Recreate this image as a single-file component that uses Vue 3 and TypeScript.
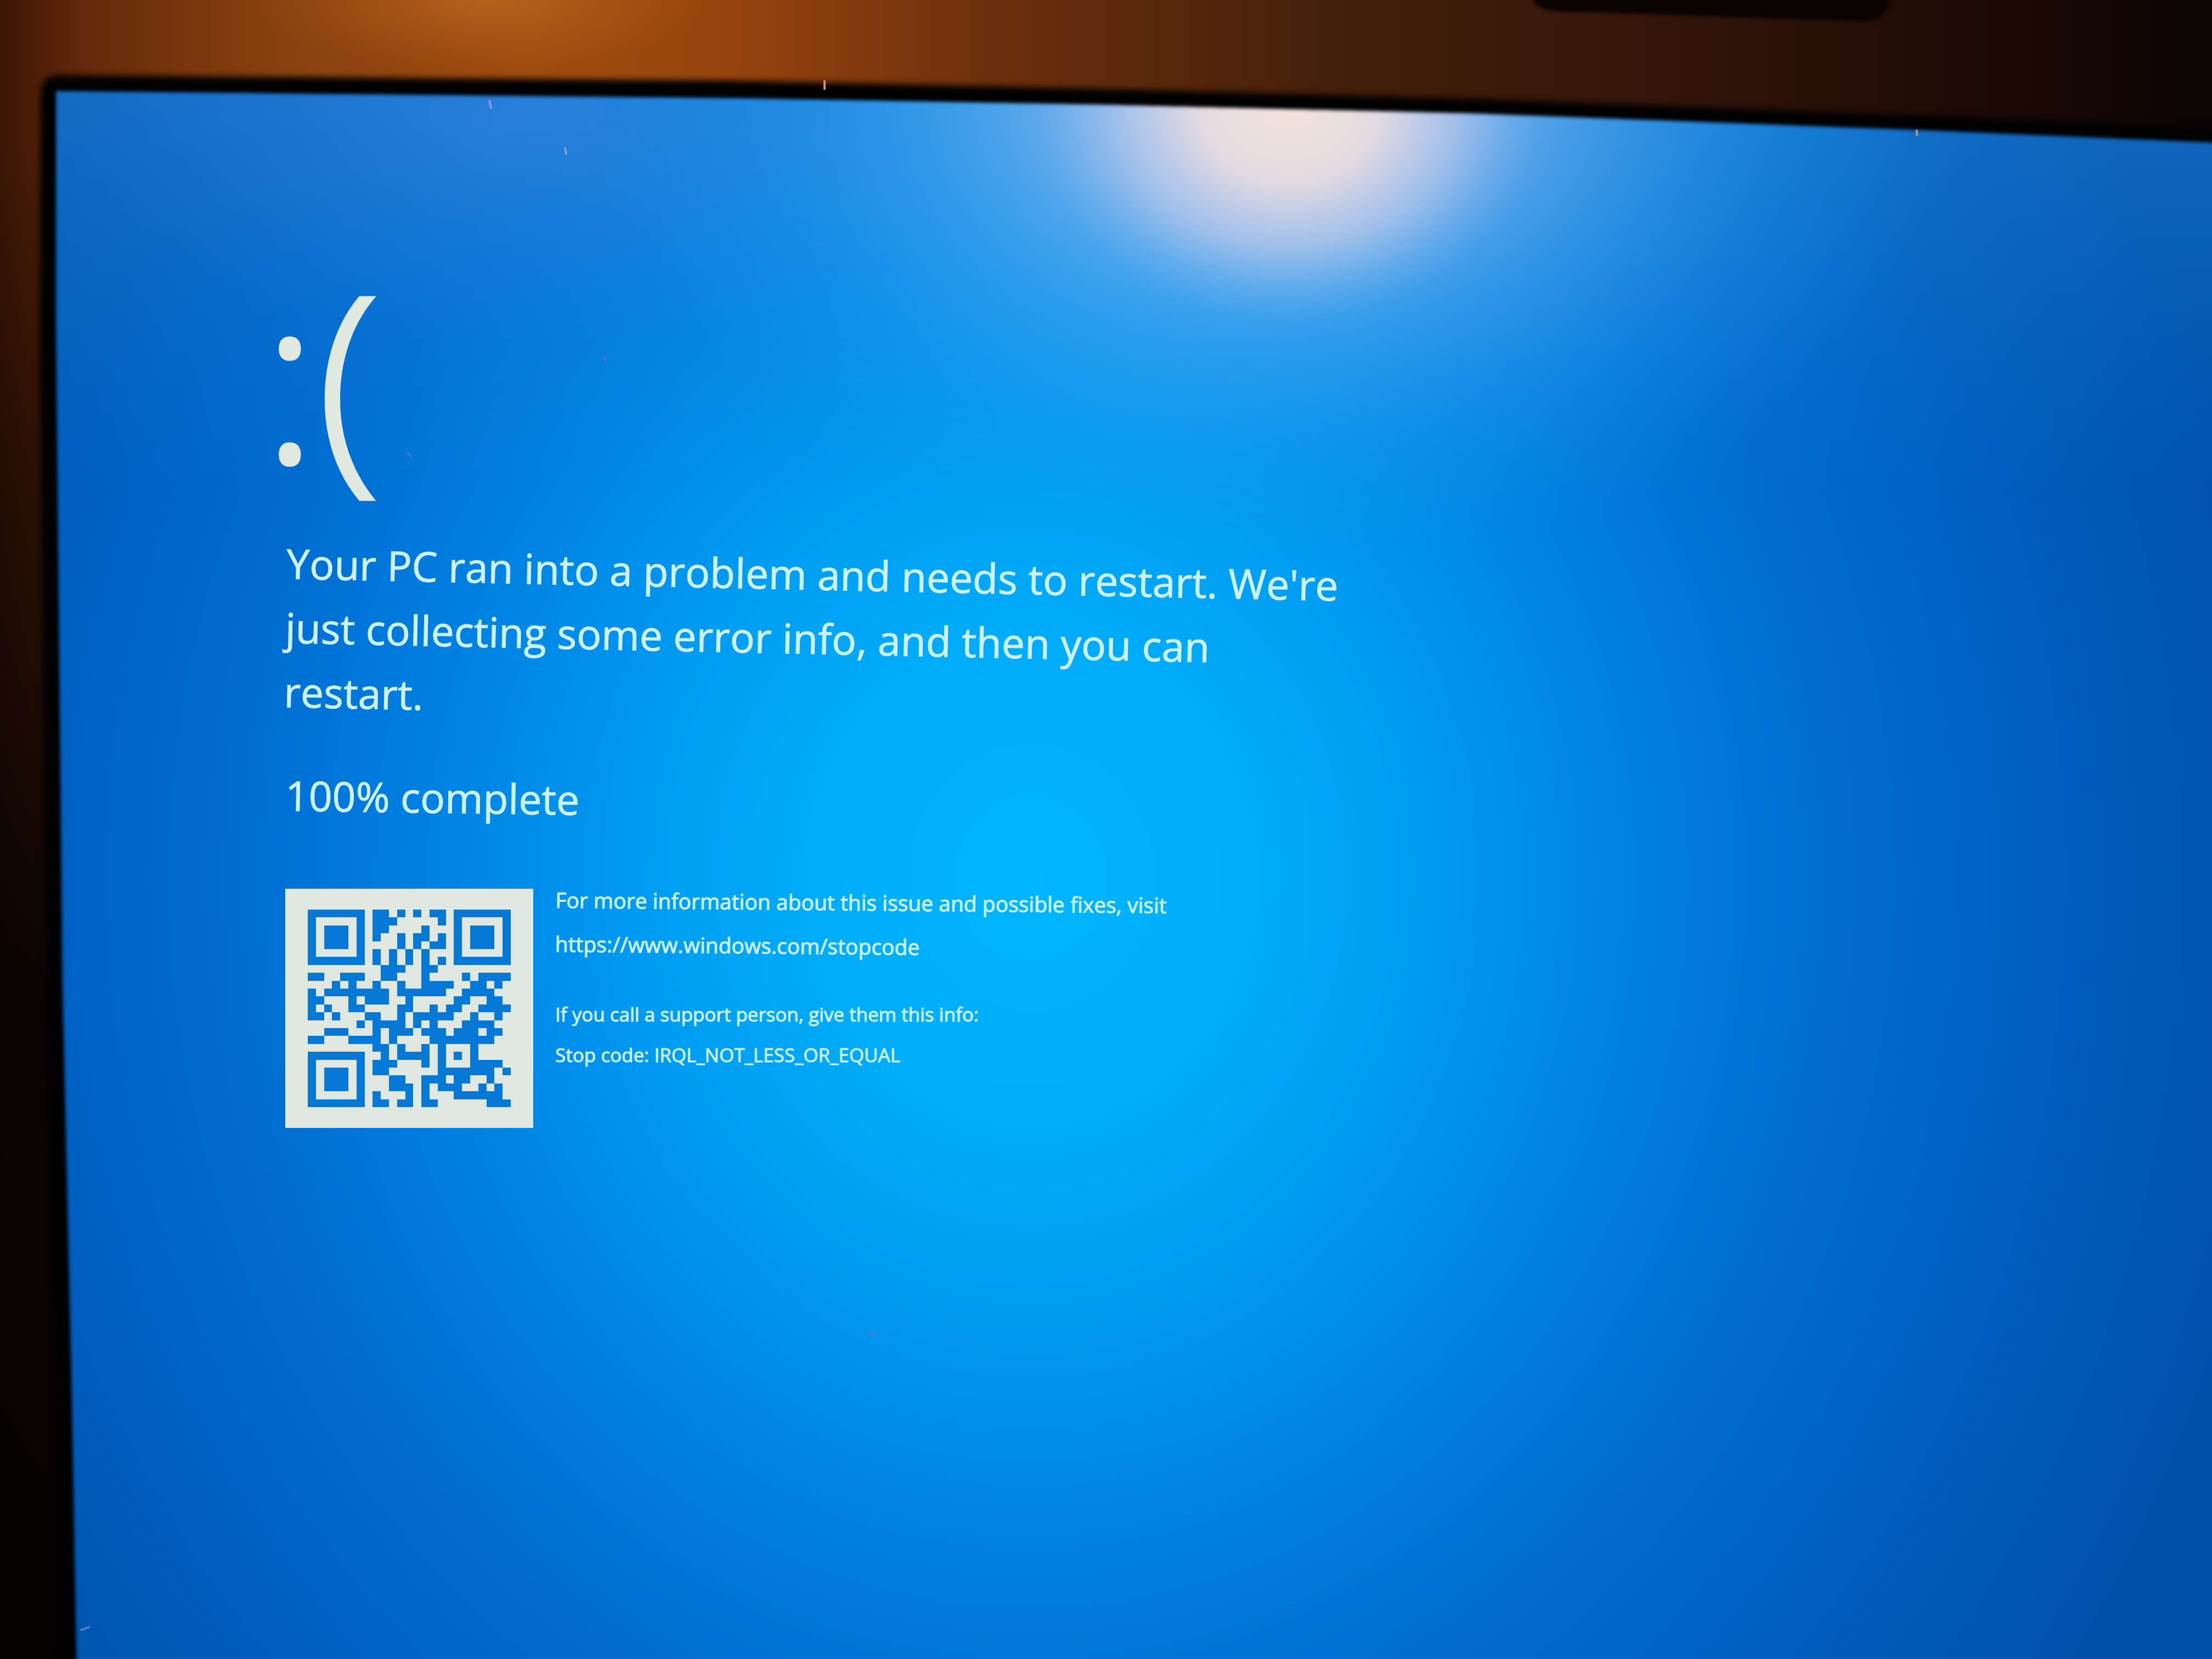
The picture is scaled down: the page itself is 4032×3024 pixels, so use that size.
<script setup lang="ts">
const modules: string[] = [
  '1111111011010101101111111',
  '1000001011100000101000001',
  '1011101011000010001011101',
  '1011101010010110101011101',
  '1011101000010101101011101',
  '1000001010101010001000001',
  '1111111010101010101111111',
  '0000000001110011000000000',
  '1100111001100010000101111',
  '0001010010010011110011010',
  '1011111111011111100111100',
  '1100010111001000001100110',
  '1010011000011001011001111',
  '1101000110010111110010010',
  '0000001011110101000111100',
  '0011100010111011101110110',
  '1100011110100001111111100',
  '0000000011010010100010000',
  '1111111001011110101010000',
  '1000001011100010100011110',
  '1011101011000000111111101',
  '1011101000110011101100100',
  '1011101000111010111001010',
  '1000001010001010001111110',
  '1111111011011011000000111',
]

// One horizontal run of filled modules becomes one rectangle in the path.
const qrPath: string = modules
  .flatMap((row, y) =>
    [...row.matchAll(/1+/g)].map((run) => `M${run.index} ${y}h${run[0].length}v1h-${run[0].length}z`),
  )
  .join('')
</script>

<template>
  <div class="monitor">
    <svg class="backdrop" viewBox="0 0 4032 3024" preserveAspectRatio="none" aria-hidden="true">
      <defs>
        <linearGradient id="bezel" x1="0" x2="1" y1="0" y2="0">
          <stop offset="0" stop-color="#3c1606" />
          <stop offset="0.04" stop-color="#662a0a" />
          <stop offset="0.12" stop-color="#86400f" />
          <stop offset="0.24" stop-color="#a04c10" />
          <stop offset="0.33" stop-color="#96440e" />
          <stop offset="0.45" stop-color="#6c2f0c" />
          <stop offset="0.6" stop-color="#44200a" />
          <stop offset="0.76" stop-color="#32150a" />
          <stop offset="0.9" stop-color="#1c0a05" />
          <stop offset="1" stop-color="#0c0405" />
        </linearGradient>
        <linearGradient id="side" x1="0" x2="0" y1="0" y2="1">
          <stop offset="0.08" stop-color="#060202" stop-opacity="0" />
          <stop offset="0.3" stop-color="#060202" stop-opacity="0.5" />
          <stop offset="0.6" stop-color="#060202" stop-opacity="0.92" />
          <stop offset="1" stop-color="#060202" />
        </linearGradient>
        <radialGradient id="lamp" gradientUnits="userSpaceOnUse" cx="0" cy="0" r="1" gradientTransform="translate(880 0) scale(420 130)">
          <stop offset="0" stop-color="#d07828" stop-opacity="0.5" />
          <stop offset="1" stop-color="#c06820" stop-opacity="0" />
        </radialGradient>
        <radialGradient id="panel" gradientUnits="userSpaceOnUse" cx="0" cy="0" r="1" gradientTransform="translate(1880 1600) scale(2300 2560)">
          <stop offset="0" stop-color="#00b6ff" />
          <stop offset="0.16" stop-color="#00adfc" />
          <stop offset="0.3" stop-color="#009df3" />
          <stop offset="0.46" stop-color="#0084e4" />
          <stop offset="0.62" stop-color="#006ed3" />
          <stop offset="0.8" stop-color="#005fc0" />
          <stop offset="1" stop-color="#0051aa" />
        </radialGradient>
        <linearGradient id="rim" gradientUnits="userSpaceOnUse" x1="0" x2="0" y1="160" y2="900">
          <stop offset="0" stop-color="#3c98e4" stop-opacity="0.34" />
          <stop offset="1" stop-color="#2090e4" stop-opacity="0" />
        </linearGradient>
        <radialGradient id="halo" gradientUnits="userSpaceOnUse" cx="0" cy="0" r="1" gradientTransform="translate(2330 180) scale(1250 860)">
          <stop offset="0" stop-color="#b4c8f0" stop-opacity="0.95" />
          <stop offset="0.3" stop-color="#8cbcf0" stop-opacity="0.75" />
          <stop offset="0.5" stop-color="#58b0f2" stop-opacity="0.52" />
          <stop offset="0.75" stop-color="#2ca4f2" stop-opacity="0.24" />
          <stop offset="1" stop-color="#1498f0" stop-opacity="0" />
        </radialGradient>
        <radialGradient id="glare" gradientUnits="userSpaceOnUse" cx="0" cy="0" r="1" gradientTransform="translate(2350 190) scale(460 400)">
          <stop offset="0" stop-color="#f3e2da" />
          <stop offset="0.35" stop-color="#ecdee0" stop-opacity="0.92" />
          <stop offset="0.65" stop-color="#d4d2e8" stop-opacity="0.5" />
          <stop offset="0.85" stop-color="#b8c8ec" stop-opacity="0.16" />
          <stop offset="1" stop-color="#a8c4f0" stop-opacity="0" />
        </radialGradient>
        <radialGradient id="sheen" gradientUnits="userSpaceOnUse" cx="0" cy="0" r="1" gradientTransform="translate(960 220) scale(900 400)">
          <stop offset="0" stop-color="#5c94e4" stop-opacity="0.3" />
          <stop offset="1" stop-color="#4080d8" stop-opacity="0" />
        </radialGradient>
        <filter id="soft" x="-2%" y="-2%" width="104%" height="104%" color-interpolation-filters="sRGB">
          <feGaussianBlur stdDeviation="6" />
        </filter>
        <filter id="edge" x="-2%" y="-2%" width="104%" height="104%" color-interpolation-filters="sRGB">
          <feGaussianBlur stdDeviation="3" />
        </filter>
        <clipPath id="glass">
          <path d="M102 166L1344 179L2016 191L2688 207L3494 237L4060 261V3060H140L130 2500L114 1800L102 600z" />
        </clipPath>
      </defs>
      <rect width="4032" height="3024" fill="url(#bezel)" />
      <rect width="1400" height="140" fill="url(#lamp)" />
      <rect width="200" height="3024" fill="url(#side)" />
      <path filter="url(#edge)" fill="#0a0303" d="M2784-20L2800 8Q2812 20 2850 21L3400 39Q3444 38 3450-20z" />
      <path filter="url(#soft)" fill="#020102" d="M74 170Q74 137 108 137L1344 147L2016 162L2688 180L3494 210L4100 236V3100H112L84 1800L72 600z" />
      <g filter="url(#edge)">
        <g clip-path="url(#glass)">
          <rect width="4100" height="3100" fill="url(#panel)" />
          <rect width="4100" height="900" fill="url(#rim)" />
          <rect width="2000" height="640" fill="url(#sheen)" />
          <rect x="1000" width="2700" height="1100" fill="url(#halo)" />
          <rect x="1800" width="1200" height="640" fill="url(#glare)" />
        </g>
      </g>
      <g stroke-linecap="round" stroke-width="4">
        <path stroke="#d8904c" d="M1503 148v14" />
        <path stroke="#8c98e0" d="M892 184l3 12M1030 270l2 10" />
        <path stroke="#4a70dc" d="M1101 650l3 10M744 826l5 6" />
        <path stroke="#5878c8" d="M148 2971l14-5M1586 2431l12 2" />
        <path stroke="#b09a78" d="M3494 238v8" />
      </g>
    </svg>

    <main class="stop">
      <p class="face">:(</p>
      <h1 class="message">
        Your PC ran into a problem and needs to restart. We're<br />
        just collecting some error info, and then you can<br />
        restart.
      </h1>
      <p class="progress">100% complete</p>
      <section class="details">
        <svg class="qr" viewBox="0 0 25 25" preserveAspectRatio="none" role="img" aria-label="QR code" shape-rendering="crispEdges">
          <path :d="qrPath" fill="#0678d6" />
        </svg>
        <div class="info">
          <p class="visit">
            For more information about this issue and possible fixes, visit<br />
            <a href="https://www.windows.com/stopcode">https://www.windows.com/stopcode</a>
          </p>
          <p class="support">
            If you call a support person, give them this info:<br />
            Stop code: IRQL_NOT_LESS_OR_EQUAL
          </p>
        </div>
      </section>
    </main>
  </div>
</template>

<style>
body {
  background: #020102;
}
</style>

<style scoped>
.monitor {
  position: relative;
  min-height: 100vh;
  overflow: hidden;
  font-family: 'Open Sans', 'Noto Sans', sans-serif;
  color: #cdf1f8;
}

.backdrop {
  position: absolute;
  inset: 0;
  width: 100%;
  height: 100%;
}

.stop {
  position: relative;
  padding: 440px 120px 120px 520px;
}

p,
h1 {
  margin: 0;
  font-weight: 400;
  -webkit-text-stroke: 1px currentColor;
}

.face {
  margin-left: -42px;
  font-size: 420px;
  line-height: 480px;
  font-weight: 300;
  color: #dfe9df;
  -webkit-text-stroke-width: 7px;
}

.message {
  margin-top: 48px;
  font-size: 75px;
  line-height: 117px;
  transform: rotate(1.2deg);
  transform-origin: 0 50%;
}

.progress {
  margin-top: 72px;
  font-size: 75px;
  line-height: 117px;
  transform: rotate(0.8deg);
  transform-origin: 0 50%;
}

.details {
  display: flex;
  align-items: flex-start;
  gap: 40px;
  margin-top: 112px;
}

.qr {
  flex: none;
  box-sizing: border-box;
  width: 452px;
  height: 436px;
  padding: 38px 41px;
  background: #dfe8e0;
}

.info {
  margin-top: -20px;
}

.visit {
  font-size: 39px;
  line-height: 80px;
  transform: rotate(0.5deg);
  transform-origin: 0 50%;
}

.visit a {
  color: inherit;
  text-decoration: none;
}

.support {
  margin-top: 52px;
  font-size: 35px;
  line-height: 74px;
}
</style>
